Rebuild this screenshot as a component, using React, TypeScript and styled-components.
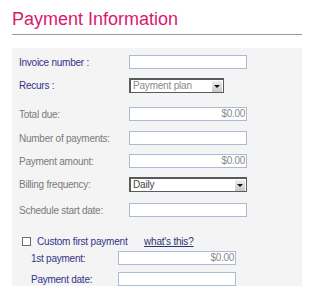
import React from "react";
import styled, { createGlobalStyle } from "styled-components";

const Global = createGlobalStyle`
  html, body { margin: 0; padding: 0; background: #ffffff; }
  body { font-family: Arial, "Liberation Sans", sans-serif; }
`;

const Page = styled.div`
  width: 290px;
  padding: 0 0 0 12px;
`;

const Title = styled.h1`
  margin: 0;
  padding-top: 8px;
  height: 26px;
  font-size: 18px;
  line-height: 22px;
  font-weight: normal;
  color: #d8196b;
  border-bottom: 1px solid #9a9a9a;
`;

const Panel = styled.div`
  margin-top: 13px;
  background: #f4f4f4;
  padding: 0 0 6px 7px;
  height: 238px;
  box-sizing: border-box;
  display: flex;
  flex-direction: column;
`;

const Row = styled.div<{ $mt: number; $h: number; $indent?: number }>`
  display: flex;
  align-items: center;
  margin-top: ${(p) => p.$mt}px;
  height: ${(p) => p.$h}px;
  padding-left: ${(p) => p.$indent ?? 0}px;
`;

const Label = styled.span<{ $muted?: boolean; $w: number }>`
  width: ${(p) => p.$w}px;
  flex: none;
  font-size: 10px;
  letter-spacing: -0.25px;
  color: ${(p) => (p.$muted ? "#7b7b7b" : "#33338a")};
  white-space: nowrap;
`;

const TextBox = styled.div<{ $w?: number }>`
  width: ${(p) => p.$w ?? 118}px;
  height: 14px;
  box-sizing: border-box;
  background: #ffffff;
  border: 1px solid #a9bcd3;
  font-size: 10px;
  letter-spacing: -0.3px;
  line-height: 12px;
  color: #8a8a8a;
  text-align: right;
  padding-right: 1px;
`;

const Select = styled.div<{ $w: number }>`
  width: ${(p) => p.$w}px;
  height: 15px;
  box-sizing: border-box;
  border: 1px solid #5a5a5a;
  border-left-width: 2px;
  border-top-width: 2px;
  background: #ffffff;
  display: flex;
  align-items: center;
  font-size: 10px;
  letter-spacing: -0.2px;
`;

const SelectText = styled.span<{ $dark?: boolean }>`
  flex: 1;
  padding-left: 2px;
  color: ${(p) => (p.$dark ? "#444" : "#8a8a8a")};
  line-height: 12px;
`;

const SelectButton = styled.span`
  width: 10px;
  height: 11px;
  margin-right: 1px;
  background: linear-gradient(#eeeeee, #c8c8c8);
  border-left: 1px solid #ffffff;
  display: flex;
  align-items: center;
  justify-content: center;
`;

const Arrow = styled.span`
  width: 0;
  height: 0;
  border-left: 3px solid transparent;
  border-right: 3px solid transparent;
  border-top: 3px solid #111;
`;

const Check = styled.span`
  width: 9px;
  height: 9px;
  box-sizing: border-box;
  border: 1px solid #6b6b6b;
  background: #ffffff;
  margin-right: 6px;
  flex: none;
`;

const CheckLabel = styled.span`
  font-size: 10px;
  letter-spacing: -0.2px;
  color: #33338a;
  width: 107px;
  flex: none;
  white-space: nowrap;
`;

const Help = styled.a`
  font-size: 10px;
  letter-spacing: -0.2px;
  color: #2b3576;
  text-decoration: underline;
`;

function Dropdown({ w, value, dark }: { w: number; value: string; dark?: boolean }) {
  return (
    <Select $w={w}>
      <SelectText $dark={dark}>{value}</SelectText>
      <SelectButton>
        <Arrow />
      </SelectButton>
    </Select>
  );
}

export default function App() {
  return (
    <>
      <Global />
      <Page>
        <Title>Payment Information</Title>
        <Panel>
          <Row $mt={7} $h={14}>
            <Label $w={110}>Invoice number :</Label>
            <TextBox />
          </Row>
          <Row $mt={9} $h={15}>
            <Label $w={110}>Recurs :</Label>
            <Dropdown w={95} value="Payment plan" />
          </Row>
          <Row $mt={14} $h={14}>
            <Label $w={110} $muted>Total due:</Label>
            <TextBox>$0.00</TextBox>
          </Row>
          <Row $mt={10} $h={14}>
            <Label $w={110} $muted>Number of payments:</Label>
            <TextBox />
          </Row>
          <Row $mt={9} $h={14}>
            <Label $w={110} $muted>Payment amount:</Label>
            <TextBox>$0.00</TextBox>
          </Row>
          <Row $mt={9} $h={15}>
            <Label $w={110} $muted>Billing frequency:</Label>
            <Dropdown w={118} value="Daily" dark />
          </Row>
          <Row $mt={11} $h={14}>
            <Label $w={110} $muted>Schedule start date:</Label>
            <TextBox />
          </Row>
          <Row $mt={19} $h={12} $indent={3}>
            <Check />
            <CheckLabel>Custom first payment</CheckLabel>
            <Help href="#">what's this?</Help>
          </Row>
          <Row $mt={4} $h={14} $indent={12}>
            <Label $w={87}>1st payment:</Label>
            <TextBox>$0.00</TextBox>
          </Row>
          <Row $mt={7} $h={14} $indent={12}>
            <Label $w={87}>Payment date:</Label>
            <TextBox />
          </Row>
        </Panel>
      </Page>
    </>
  );
}
